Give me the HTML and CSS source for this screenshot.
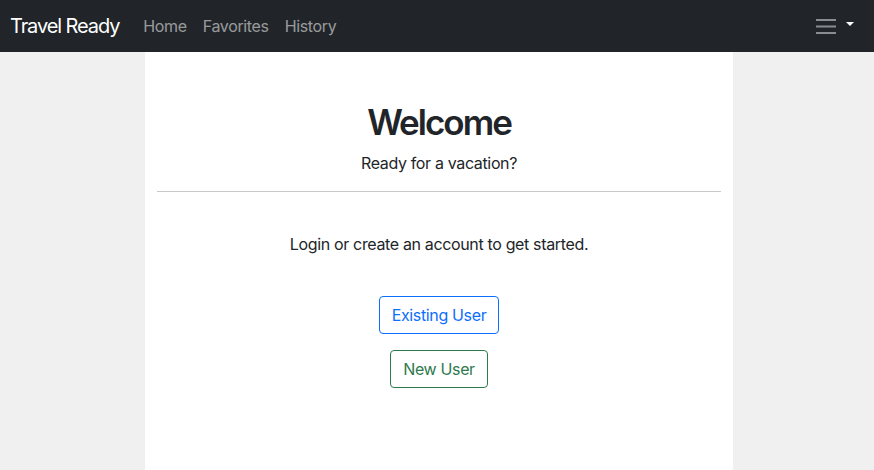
FILE: index.html
```html
<!DOCTYPE html>
<html lang="en">
<head>
<meta charset="utf-8">
<title>Travel Ready</title>
<link rel="stylesheet" href="styles.css">
</head>
<body>
<nav class="navbar">
  <a class="brand" href="#">Travel Ready</a>
  <ul class="nav-links">
    <li><a href="#">Home</a></li>
    <li><a href="#">Favorites</a></li>
    <li><a href="#">History</a></li>
  </ul>
  <button class="menu-toggle" aria-label="Menu">
    <svg class="burger" width="20" height="16" viewBox="0 0 20 16">
      <rect x="0" y="1" width="20" height="2" fill="#8a8c8f"/>
      <rect x="0" y="7.5" width="20" height="2" fill="#8a8c8f"/>
      <rect x="0" y="14" width="20" height="2" fill="#8a8c8f"/>
    </svg>
    <span class="caret"></span>
  </button>
</nav>
<main class="page">
  <section class="panel">
    <h1 class="title">Welcome</h1>
    <p class="subtitle">Ready for a vacation?</p>
    <hr class="divider">
    <p class="intro">Login or create an account to get started.</p>
    <div class="actions">
      <button class="btn btn-blue">Existing User</button>
      <button class="btn btn-green">New User</button>
    </div>
  </section>
</main>
</body>
</html>
```

FILE: styles.css
```css
* { box-sizing: border-box; }
html, body { height: 100%; }
body {
  margin: 0;
  background: #f0f0f0;
  font-family: Inter, "Noto Sans", "Liberation Sans", sans-serif;
  color: #212529;
  letter-spacing: -0.35px;
  display: flex;
  flex-direction: column;
}
.navbar {
  height: 52px;
  flex: none;
  background: #212529;
  display: flex;
  align-items: center;
  padding: 0 20px 0 10px;
}
.brand {
  color: #fff;
  font-size: 20px;
  text-decoration: none;
  margin-right: 16px;
  letter-spacing: -1.1px;
}
.nav-links {
  list-style: none;
  margin: 0;
  padding: 0;
  display: flex;
  flex: 1;
}
.nav-links a {
  display: block;
  color: rgba(255,255,255,0.55);
  text-decoration: none;
  font-size: 16px;
  padding: 8px 8px;
}
.menu-toggle {
  background: none;
  border: 0;
  padding: 0;
  display: flex;
  align-items: center;
  gap: 10px;
  cursor: pointer;
}
.burger { display: block; }
.caret {
  width: 0;
  height: 0;
  border-left: 4px solid transparent;
  border-right: 4px solid transparent;
  border-top: 4px solid #fff;
  margin-top: -4px;
}
.page {
  flex: 1;
  display: flex;
}
.panel {
  width: 588px;
  margin-left: 145px;
  background: #fff;
  padding: 49px 12px 0;
  text-align: center;
}
.title {
  margin: 0;
  font-size: 35px;
  font-weight: 600;
  line-height: 42px;
  letter-spacing: -2px;
}
.subtitle {
  margin: 8px 0 0;
  font-size: 16px;
  line-height: 24px;
}
.divider {
  margin: 16px 0 0;
  border: 0;
  border-top: 1px solid #c8c8c8;
}
.intro {
  margin: 40px 0 0;
  font-size: 16px;
  line-height: 24px;
}
.actions {
  margin-top: 40px;
  display: flex;
  flex-direction: column;
  align-items: center;
  gap: 16px;
}
.btn {
  font-family: inherit;
  font-size: 16px;
  line-height: 24px;
  letter-spacing: -0.35px;
  padding: 6px 12px;
  background: #fff;
  border-radius: 4px;
  border: 1px solid;
  cursor: pointer;
}
.btn-blue { color: #0d6efd; border-color: #0d6efd; }
.btn-green { color: #2f7a4d; border-color: #2f7a4d; }
```
